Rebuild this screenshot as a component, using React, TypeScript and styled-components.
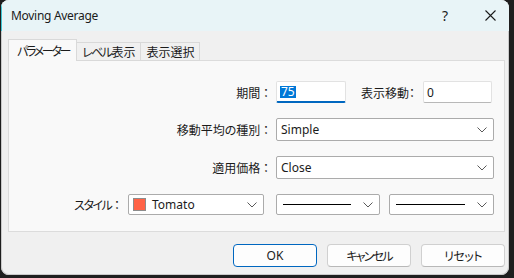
import React from "react";
import styled, { createGlobalStyle } from "styled-components";

const Global = createGlobalStyle`
  html, body { margin: 0; padding: 0; background: #1e1e1e; }
  body {
    font-family: "Noto Sans", "Noto Sans CJK JP", sans-serif;
    font-size: 12px;
    color: #1b1b1b;
    width: 514px;
    height: 278px;
    overflow: hidden;
  }
  #root { padding: 0 5px 0 1px; }
`;

const Window = styled.div`
  width: 508px;
  height: 275px;
  background: #f0f0f0;
  border-radius: 8px;
  overflow: hidden;
  display: flex;
  flex-direction: column;
  box-shadow: inset 0 0 0 1px #c9c9c9;
`;

const TitleBar = styled.div`
  height: 31px;
  flex: none;
  background: #e8f4f7;
  display: flex;
  align-items: center;
  padding-left: 9px;
  border-left: 1px solid #3fc6d4;
`;

const Title = styled.div`
  flex: 1;
  font-size: 12px;
  letter-spacing: -0.3px;
`;

const TitleButton = styled.div<{ $mr?: number }>`
  width: 38px;
  height: 31px;
  margin-right: ${(p) => p.$mr ?? 0}px;
  display: flex;
  align-items: center;
  justify-content: center;
  font-size: 14px;
  color: #1b1b1b;
`;

const Body = styled.div`
  flex: 1;
  display: flex;
  flex-direction: column;
  padding: 8px 4px 0 6px;
`;

const Tabs = styled.div`
  display: flex;
  align-items: flex-end;
  height: 22px;
  margin-bottom: -1px;
  position: relative;
  z-index: 1;
`;

const Tab = styled.div<{ $active?: boolean }>`
  font-family: "Noto Sans CJK JP", sans-serif;
  font-feature-settings: "palt";
  font-size: 12px;
  height: ${(p) => (p.$active ? "22px" : "19px")};
  padding: ${(p) => (p.$active ? "0 7px 0 8px" : "0 5px 0 5px")};
  display: flex;
  align-items: center;
  padding-bottom: ${(p) => (p.$active ? "1px" : "0")};
  box-sizing: border-box;
  background: ${(p) => (p.$active ? "#f9f9f9" : "#f0f0f0")};
  border: 1px solid #d9d9d9;
  border-bottom: ${(p) => (p.$active ? "none" : "1px solid #d9d9d9")};
  margin-left: ${(p) => (p.$active ? "0" : "-1px")};
  &:first-child { margin-left: 1px; }
`;

const Kana = styled.span<{ $ls: number }>`
  letter-spacing: ${(p) => p.$ls}px;
`;

const Panel = styled.div`
  height: 172px;
  width: 497px;
  margin-left: 1px;
  box-sizing: border-box;
  background: #f9f9f9;
  border: 1px solid #dcdcdc;
  display: flex;
  flex-direction: column;
  padding-top: 20px;
  gap: 15px;
`;

const Row = styled.div<{ $h: number; $labelW: number }>`
  display: flex;
  align-items: center;
  height: ${(p) => p.$h}px;
  & > label {
    width: ${(p) => p.$labelW}px;
  }
`;

const Label = styled.label`
  font-family: "Noto Sans CJK JP", sans-serif;
  font-feature-settings: "palt";
  font-size: 12px;
  text-align: right;
  white-space: nowrap;
  flex: none;
  margin-right: 7px;
`;

const InlineLabel = styled(Label)`
  margin-left: 15px;
  margin-right: 8px;
`;

const Input = styled.div<{ $w: number; $focus?: boolean }>`
  width: ${(p) => p.$w}px;
  height: 22px;
  box-sizing: border-box;
  background: #fff;
  border: 1px solid #e2e2e2;
  border-bottom: ${(p) => (p.$focus ? "2px solid #0067c0" : "1px solid #b8b8b8")};
  border-radius: 2px;
  display: flex;
  align-items: center;
  padding-left: 3px;
  font-size: 12px;
`;

const Selected = styled.span`
  background: #0078d7;
  color: #fff;
  padding: 0 1px;
  line-height: 12px;
`;

const Select = styled.div<{ $w: number; $h?: number }>`
  width: ${(p) => p.$w}px;
  height: ${(p) => p.$h ?? 23}px;
  box-sizing: border-box;
  background: #fff;
  border: 1px solid #ababab;
  border-radius: 2px;
  display: flex;
  align-items: center;
  padding: 0 6px 0 4px;
  gap: 6px;
  font-size: 12px;
  flex: none;
`;

const SelectText = styled.span`
  flex: 1;
  white-space: nowrap;
`;

const Swatch = styled.span<{ $c: string }>`
  width: 13px;
  height: 13px;
  box-sizing: border-box;
  background: ${(p) => p.$c};
  border: 1px solid #8c8c8c;
  flex: none;
`;

const LinePreview = styled.span`
  flex: 1;
  height: 1px;
  background: #000;
  margin: 0 6px 0 2px;
`;

const Gap = styled.span<{ $w: number }>`
  width: ${(p) => p.$w}px;
  flex: none;
`;

const Footer = styled.div`
  display: flex;
  justify-content: flex-end;
  gap: 10px;
  padding: 12px 0 0 0;
`;

const Button = styled.div<{ $primary?: boolean }>`
  width: 84px;
  height: 23px;
  box-sizing: border-box;
  border-radius: 4px;
  background: #fdfdfd;
  border: 1px solid ${(p) => (p.$primary ? "#0067c0" : "#d0d0d0")};
  border-bottom-color: ${(p) => (p.$primary ? "#0067c0" : "#b8b8b8")};
  display: flex;
  align-items: center;
  justify-content: center;
  font-family: "Noto Sans", "Noto Sans CJK JP", sans-serif;
  font-feature-settings: "palt";
  font-size: 12px;
`;

const Chevron = () => (
  <svg width="10" height="6" viewBox="0 0 10 6" style={{ flex: "none" }}>
    <path d="M0.5 0.5 L5 5 L9.5 0.5" fill="none" stroke="#5a5a5a" strokeWidth="1" />
  </svg>
);

const CloseIcon = () => (
  <svg width="11" height="11" viewBox="0 0 11 11">
    <path d="M0.5 0.5 L10.5 10.5 M10.5 0.5 L0.5 10.5" stroke="#1b1b1b" strokeWidth="1.1" />
  </svg>
);

export default function App() {
  return (
    <>
      <Global />
      <Window>
        <TitleBar>
          <Title>Moving Average</Title>
          <TitleButton $mr={7}>?</TitleButton>
          <TitleButton>
            <CloseIcon />
          </TitleButton>
        </TitleBar>
        <Body>
          <Tabs>
            <Tab $active>
              <Kana $ls={-2.3}>パラメーター</Kana>
            </Tab>
            <Tab>
              <Kana $ls={-1.6}>レベル</Kana>表示
            </Tab>
            <Tab>表示選択</Tab>
          </Tabs>
          <Panel>
            <Row $h={22} $labelW={260}>
              <Label>期間 ：</Label>
              <Input $w={70} $focus>
                <Selected>75</Selected>
              </Input>
              <InlineLabel as="span">表示移動：</InlineLabel>
              <Input $w={69}>0</Input>
            </Row>
            <Row $h={23} $labelW={260}>
              <Label>移動平均の種別 ：</Label>
              <Select $w={218}>
                <SelectText>Simple</SelectText>
                <Chevron />
              </Select>
            </Row>
            <Row $h={23} $labelW={260}>
              <Label>適用価格 ：</Label>
              <Select $w={218}>
                <SelectText>Close</SelectText>
                <Chevron />
              </Select>
            </Row>
            <Row $h={21} $labelW={111}>
              <Label>
                <Kana $ls={-1.5}>スタイル</Kana> ：
              </Label>
              <Gap $w={1} />
              <Select $w={136} $h={21}>
                <Swatch $c="#ff6347" />
                <SelectText>Tomato</SelectText>
                <Chevron />
              </Select>
              <Gap $w={12} />
              <Select $w={104} $h={21}>
                <LinePreview />
                <Chevron />
              </Select>
              <Gap $w={9} />
              <Select $w={105} $h={21}>
                <LinePreview />
                <Chevron />
              </Select>
            </Row>
          </Panel>
          <Footer>
            <Button $primary>OK</Button>
            <Button>
              <Kana $ls={-1.8}>キャンセル</Kana>
            </Button>
            <Button>
              <Kana $ls={-0.5}>リセット</Kana>
            </Button>
          </Footer>
        </Body>
      </Window>
    </>
  );
}
